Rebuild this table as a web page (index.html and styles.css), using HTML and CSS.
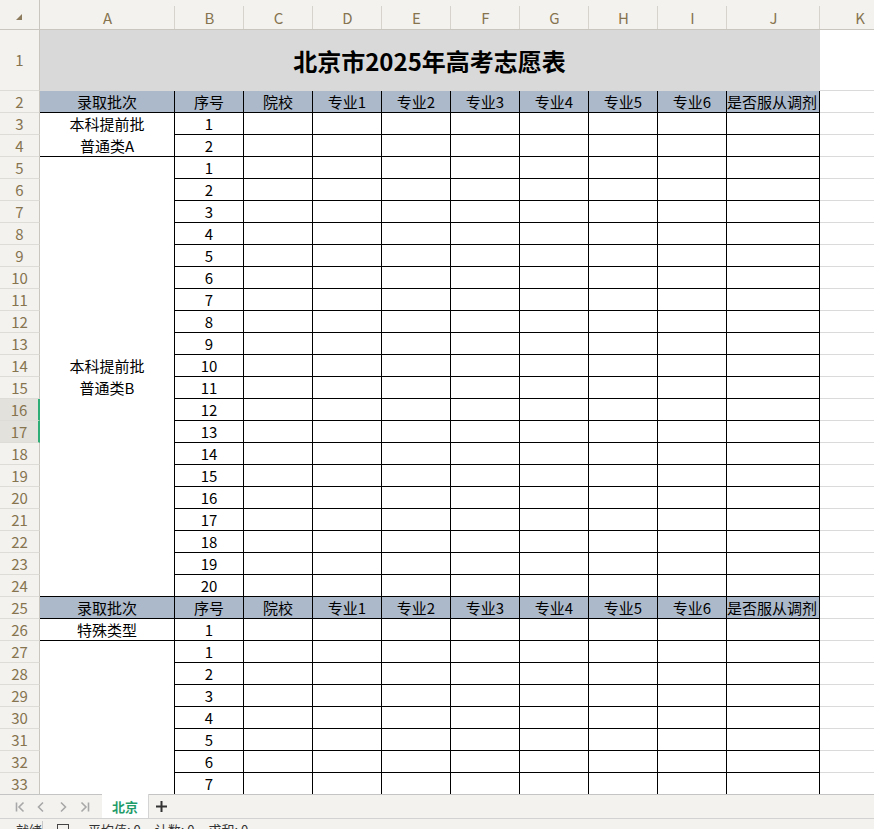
FILE: index.html
```html
<!DOCTYPE html>
<html lang="zh-CN">
<head>
<meta charset="utf-8">
<title>北京市2025年高考志愿表</title>
<link rel="stylesheet" href="styles.css">
</head>
<body>
<div class="app">
  <div class="sheet">
    <div class="grid">
      <div class="hd corner"><svg width="6" height="6" viewBox="0 0 6 6"><polygon points="6,0 6,6 0,6" fill="#8c7b5c"/></svg></div>
      <div class="hd">A</div><div class="hd">B</div><div class="hd">C</div><div class="hd">D</div><div class="hd">E</div><div class="hd">F</div><div class="hd">G</div><div class="hd">H</div><div class="hd">I</div><div class="hd">J</div><div class="hd">K</div>

      <div class="rn">1</div><div class="title">北京市2025年高考志愿表</div><div class="c"></div>

      <div class="rn">2</div><div class="h">录取批次</div><div class="h">序号</div><div class="h">院校</div><div class="h">专业1</div><div class="h">专业2</div><div class="h">专业3</div><div class="h">专业4</div><div class="h">专业5</div><div class="h">专业6</div><div class="h hl">是否服从调剂</div><div class="c"></div>

      <div class="rn">3</div><div class="a span2 bb">本科提前批<br>普通类A</div><div class="t">1</div><div class="t"></div><div class="t"></div><div class="t"></div><div class="t"></div><div class="t"></div><div class="t"></div><div class="t"></div><div class="t"></div><div class="c"></div>
      <div class="rn">4</div><div class="t">2</div><div class="t"></div><div class="t"></div><div class="t"></div><div class="t"></div><div class="t"></div><div class="t"></div><div class="t"></div><div class="t"></div><div class="c"></div>

      <div class="rn">5</div><div class="a span20 bb">本科提前批<br>普通类B</div><div class="t">1</div><div class="t"></div><div class="t"></div><div class="t"></div><div class="t"></div><div class="t"></div><div class="t"></div><div class="t"></div><div class="t"></div><div class="c"></div>
      <div class="rn">6</div><div class="t">2</div><div class="t"></div><div class="t"></div><div class="t"></div><div class="t"></div><div class="t"></div><div class="t"></div><div class="t"></div><div class="t"></div><div class="c"></div>
      <div class="rn">7</div><div class="t">3</div><div class="t"></div><div class="t"></div><div class="t"></div><div class="t"></div><div class="t"></div><div class="t"></div><div class="t"></div><div class="t"></div><div class="c"></div>
      <div class="rn">8</div><div class="t">4</div><div class="t"></div><div class="t"></div><div class="t"></div><div class="t"></div><div class="t"></div><div class="t"></div><div class="t"></div><div class="t"></div><div class="c"></div>
      <div class="rn">9</div><div class="t">5</div><div class="t"></div><div class="t"></div><div class="t"></div><div class="t"></div><div class="t"></div><div class="t"></div><div class="t"></div><div class="t"></div><div class="c"></div>
      <div class="rn">10</div><div class="t">6</div><div class="t"></div><div class="t"></div><div class="t"></div><div class="t"></div><div class="t"></div><div class="t"></div><div class="t"></div><div class="t"></div><div class="c"></div>
      <div class="rn">11</div><div class="t">7</div><div class="t"></div><div class="t"></div><div class="t"></div><div class="t"></div><div class="t"></div><div class="t"></div><div class="t"></div><div class="t"></div><div class="c"></div>
      <div class="rn">12</div><div class="t">8</div><div class="t"></div><div class="t"></div><div class="t"></div><div class="t"></div><div class="t"></div><div class="t"></div><div class="t"></div><div class="t"></div><div class="c"></div>
      <div class="rn">13</div><div class="t">9</div><div class="t"></div><div class="t"></div><div class="t"></div><div class="t"></div><div class="t"></div><div class="t"></div><div class="t"></div><div class="t"></div><div class="c"></div>
      <div class="rn">14</div><div class="t">10</div><div class="t"></div><div class="t"></div><div class="t"></div><div class="t"></div><div class="t"></div><div class="t"></div><div class="t"></div><div class="t"></div><div class="c"></div>
      <div class="rn">15</div><div class="t">11</div><div class="t"></div><div class="t"></div><div class="t"></div><div class="t"></div><div class="t"></div><div class="t"></div><div class="t"></div><div class="t"></div><div class="c"></div>
      <div class="rn sel">16</div><div class="t">12</div><div class="t"></div><div class="t"></div><div class="t"></div><div class="t"></div><div class="t"></div><div class="t"></div><div class="t"></div><div class="t"></div><div class="c"></div>
      <div class="rn sel">17</div><div class="t">13</div><div class="t"></div><div class="t"></div><div class="t"></div><div class="t"></div><div class="t"></div><div class="t"></div><div class="t"></div><div class="t"></div><div class="c"></div>
      <div class="rn">18</div><div class="t">14</div><div class="t"></div><div class="t"></div><div class="t"></div><div class="t"></div><div class="t"></div><div class="t"></div><div class="t"></div><div class="t"></div><div class="c"></div>
      <div class="rn">19</div><div class="t">15</div><div class="t"></div><div class="t"></div><div class="t"></div><div class="t"></div><div class="t"></div><div class="t"></div><div class="t"></div><div class="t"></div><div class="c"></div>
      <div class="rn">20</div><div class="t">16</div><div class="t"></div><div class="t"></div><div class="t"></div><div class="t"></div><div class="t"></div><div class="t"></div><div class="t"></div><div class="t"></div><div class="c"></div>
      <div class="rn">21</div><div class="t">17</div><div class="t"></div><div class="t"></div><div class="t"></div><div class="t"></div><div class="t"></div><div class="t"></div><div class="t"></div><div class="t"></div><div class="c"></div>
      <div class="rn">22</div><div class="t">18</div><div class="t"></div><div class="t"></div><div class="t"></div><div class="t"></div><div class="t"></div><div class="t"></div><div class="t"></div><div class="t"></div><div class="c"></div>
      <div class="rn">23</div><div class="t">19</div><div class="t"></div><div class="t"></div><div class="t"></div><div class="t"></div><div class="t"></div><div class="t"></div><div class="t"></div><div class="t"></div><div class="c"></div>
      <div class="rn">24</div><div class="t">20</div><div class="t"></div><div class="t"></div><div class="t"></div><div class="t"></div><div class="t"></div><div class="t"></div><div class="t"></div><div class="t"></div><div class="c"></div>

      <div class="rn">25</div><div class="h">录取批次</div><div class="h">序号</div><div class="h">院校</div><div class="h">专业1</div><div class="h">专业2</div><div class="h">专业3</div><div class="h">专业4</div><div class="h">专业5</div><div class="h">专业6</div><div class="h hl">是否服从调剂</div><div class="c"></div>

      <div class="rn">26</div><div class="a bb">特殊类型</div><div class="t">1</div><div class="t"></div><div class="t"></div><div class="t"></div><div class="t"></div><div class="t"></div><div class="t"></div><div class="t"></div><div class="t"></div><div class="c"></div>

      <div class="rn">27</div><div class="a span7"></div><div class="t">1</div><div class="t"></div><div class="t"></div><div class="t"></div><div class="t"></div><div class="t"></div><div class="t"></div><div class="t"></div><div class="t"></div><div class="c"></div>
      <div class="rn">28</div><div class="t">2</div><div class="t"></div><div class="t"></div><div class="t"></div><div class="t"></div><div class="t"></div><div class="t"></div><div class="t"></div><div class="t"></div><div class="c"></div>
      <div class="rn">29</div><div class="t">3</div><div class="t"></div><div class="t"></div><div class="t"></div><div class="t"></div><div class="t"></div><div class="t"></div><div class="t"></div><div class="t"></div><div class="c"></div>
      <div class="rn">30</div><div class="t">4</div><div class="t"></div><div class="t"></div><div class="t"></div><div class="t"></div><div class="t"></div><div class="t"></div><div class="t"></div><div class="t"></div><div class="c"></div>
      <div class="rn">31</div><div class="t">5</div><div class="t"></div><div class="t"></div><div class="t"></div><div class="t"></div><div class="t"></div><div class="t"></div><div class="t"></div><div class="t"></div><div class="c"></div>
      <div class="rn">32</div><div class="t">6</div><div class="t"></div><div class="t"></div><div class="t"></div><div class="t"></div><div class="t"></div><div class="t"></div><div class="t"></div><div class="t"></div><div class="c"></div>
      <div class="rn">33</div><div class="t">7</div><div class="t"></div><div class="t"></div><div class="t"></div><div class="t"></div><div class="t"></div><div class="t"></div><div class="t"></div><div class="t"></div><div class="c"></div>
    </div>
  </div>

  <div class="tabbar">
    <div class="nav">
      <svg class="navi first" width="10" height="12" viewBox="0 0 10 12"><path d="M1.5 1.5v9M8.5 1.5 4 6l4.5 4.5" /></svg>
      <svg class="navi" width="7" height="12" viewBox="0 0 7 12"><path d="M6 1.5 1.5 6 6 10.5" /></svg>
      <svg class="navi" width="7" height="12" viewBox="0 0 7 12"><path d="M1 1.5 5.5 6 1 10.5" /></svg>
      <svg class="navi" width="10" height="12" viewBox="0 0 10 12"><path d="M8.5 1.5v9M1.5 1.5 6 6l-4.5 4.5" /></svg>
    </div>
    <div class="tab">北京</div>
    <div class="add"><svg width="11" height="11" viewBox="0 0 11 11"><path d="M5.5 0v11M0 5.5h11" /></svg></div>
  </div>

  <div class="status">
    <span class="st-mode">就绪</span>
    <span class="st-sep"></span>
    <span class="st-box"></span>
    <span class="st-item">平均值: 0</span>
    <span class="st-item">计数: 0</span>
    <span class="st-item">求和: 0</span>
  </div>
</div>
</body>
</html>
```

FILE: styles.css
```css
* { box-sizing: border-box; }

html, body {
  margin: 0;
  padding: 0;
  background: #ffffff;
  overflow: hidden;
}

body {
  font-family: "Noto Sans CJK SC", "Noto Sans", sans-serif;
  font-size: 15px;
  color: #000;
}

.app {
  width: 874px;
  height: 829px;
  display: flex;
  flex-direction: column;
  overflow: hidden;
}

.sheet {
  flex: 0 0 794px;
  height: 794px;
  overflow: hidden;
}

.grid {
  display: grid;
  width: 900px;
  grid-template-columns: 40px 135px repeat(8, 69px) 93px 80px;
  grid-template-rows: 30px 61px repeat(32, 22px);
}

.grid > div {
  display: flex;
  align-items: center;
  justify-content: center;
  text-align: center;
  line-height: 20px;
  white-space: nowrap;
  overflow: hidden;
}

/* column headers */
.hd {
  background: #f3f2ef linear-gradient(#d6d3cc, #d6d3cc) right bottom / 1px 23px no-repeat;
  border-bottom: 1px solid #c9c6bf;
  color: #86744f;
  font-size: 15px;
  padding-top: 6px;
}

.corner {
  background: #f3f2ef;
  border-right: 1px solid #c9c6bf;
  padding-top: 4px;
  padding-right: 2px;
}

/* row numbers */
.rn {
  background: #f3f2ef;
  border-right: 1px solid #c9c6bf;
  border-bottom: 1px solid #dedcd6;
  color: #86744f;
  font-size: 15px;
}

.rn.sel {
  background: #e3e1db;
  border-right: 2px solid #2eae76;
}

/* title row */
.title {
  grid-column: span 10;
  background: #d9d9d9;
  border-right: 1px solid #d9d9d9;
  border-bottom: 1px solid #d9d9d9;
  font-size: 24px;
  font-weight: 700;
  padding-top: 2px;
}

/* empty grid cells */
.c {
  border-right: 1px solid #dadada;
  border-bottom: 1px solid #dadada;
}

/* table cells */
.t {
  border-right: 1px solid #000;
  border-bottom: 1px solid #000;
  background: #fff;
}

.h {
  background: #acb9ca;
  border-right: 1px solid #000;
  border-bottom: 1px solid #000;
}

.grid > .hl {
  justify-content: flex-start;
}

.a {
  background: #fff;
  border-right: 1px solid #000;
}

.grid > .a {
  line-height: 22px;
}

.a.bb { border-bottom: 1px solid #000; }
.span2 { grid-row: span 2; }
.span7 { grid-row: span 7; }
.span20 { grid-row: span 20; }

/* sheet tabs */
.tabbar {
  flex: 0 0 24px;
  height: 24px;
  display: flex;
  align-items: stretch;
  background: #f3f2ef;
  border-top: 1px solid #c4c4c4;
}

.nav {
  width: 102px;
  display: flex;
  align-items: center;
  padding-left: 15px;
}

.navi {
  fill: none;
  stroke: #a8a8a8;
  stroke-width: 1.6;
}

.nav .navi:nth-child(1) { margin-right: 12px; }
.nav .navi:nth-child(2) { margin-right: 16px; }
.nav .navi:nth-child(3) { margin-right: 13px; }

.tab {
  width: 47px;
  background: #ffffff;
  border-right: 1px solid #d4d4d4;
  color: #1f9c6a;
  font-weight: 700;
  font-size: 13px;
  display: flex;
  align-items: center;
  justify-content: center;
  margin-top: -1px;
}

.add {
  display: flex;
  align-items: center;
  padding-left: 7px;
}

.add path {
  stroke: #333;
  stroke-width: 2;
}

/* status bar */
.status {
  flex: 1;
  background: #f3f2ef;
  border-top: 1px solid #d2d2d2;
  display: flex;
  align-items: flex-start;
  font-size: 13px;
  line-height: 18px;
  color: #333;
  padding-left: 16px;
  padding-top: 2px;
  overflow: hidden;
}

.st-mode { width: 26px; }

.st-sep {
  width: 1px;
  height: 12px;
  background: #c8c8c8;
  margin-right: 14px;
}

.st-box {
  width: 12px;
  height: 12px;
  border: 1.5px solid #444;
  margin-top: 3px;
  margin-right: 19px;
}

.st-item { margin-right: 14px; }
```
